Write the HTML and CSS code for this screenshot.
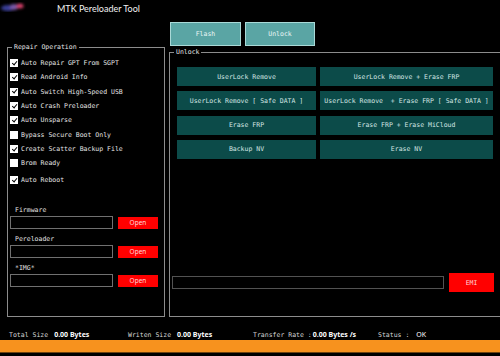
FILE: index.html
```html
<html lang="en">
<head>
	<meta charset="utf-8">
	<title>MTK Pereloader Tool</title>
	<link rel="stylesheet" href="styles.css">
</head>
<body>
	<div class="titlebar">
		<svg class="logo" width="30" height="16" viewBox="0 0 30 16">
			<defs>
				<filter id="soft"><feGaussianBlur stdDeviation="1.4"></feGaussianBlur></filter>
			</defs>
			<g filter="url(#soft)">
				<ellipse cx="8" cy="8" rx="7" ry="3" fill="#3a3f9a"></ellipse>
				<ellipse cx="14" cy="7" rx="4" ry="3" fill="#7a5aa8"></ellipse>
				<ellipse cx="20" cy="6" rx="3.5" ry="2.5" fill="#d8406a"></ellipse>
			</g>
		</svg>
		<span class="title">MTK Pereloader Tool</span>
	</div>

	<div class="main">
		<div class="group repair">
			<span class="legend">Repair Operation</span>
			<ul class="options">
				<li><span class="check on"></span>Auto Repair GPT From SGPT</li>
				<li><span class="check on"></span>Read Android Info</li>
				<li><span class="check on"></span>Auto Switch High-Speed USB</li>
				<li><span class="check on"></span>Auto Crash Preloader</li>
				<li><span class="check on"></span>Auto Unsparse</li>
				<li><span class="check"></span>Bypass Secure Boot Only</li>
				<li><span class="check on"></span>Create Scatter Backup File</li>
				<li><span class="check"></span>Brom Ready</li>
				<li class="reboot"><span class="check on"></span>Auto Reboot</li>
			</ul>
			<div class="files">
				<div class="file_label">Firmware</div>
				<div class="file_row"><input class="field" type="text"><button class="red_button">Open</button></div>
				<div class="file_label">Pereloader</div>
				<div class="file_row"><input class="field" type="text"><button class="red_button">Open</button></div>
				<div class="file_label">*IMG*</div>
				<div class="file_row"><input class="field" type="text"><button class="red_button">Open</button></div>
			</div>
		</div>

		<div class="side">
			<div class="tabs">
				<button class="tab flash_tab">Flash</button>
				<button class="tab unlock_tab">Unlock</button>
			</div>
			<div class="group unlock">
				<span class="legend">Unlock</span>
				<div class="actions">
					<button class="action">UserLock Remove</button>
					<button class="action">UserLock Remove + Erase FRP</button>
					<button class="action">UserLock Remove [ Safe DATA ]</button>
					<button class="action">UserLock Remove &nbsp;+ Erase FRP [ Safe DATA ]</button>
					<button class="action">Erase FRP</button>
					<button class="action">Erase FRP + Erase MiCloud</button>
					<button class="action">Backup NV</button>
					<button class="action">Erase NV</button>
				</div>
				<div class="emi_row">
					<input class="field log_field" type="text">
					<button class="red_button emi_button">EMI</button>
				</div>
			</div>
		</div>
	</div>

	<div class="status">
		<div class="stat total"><span class="stat_label">Total Size</span><span class="stat_value">0.00 Bytes</span></div>
		<div class="stat written"><span class="stat_label">Writen Size</span><span class="stat_value">0.00 Bytes</span></div>
		<div class="stat rate"><span class="stat_label">Transfer Rate :</span><span class="stat_value">0.00 Bytes /s</span></div>
		<div class="stat state"><span class="stat_label">Status :</span><span class="stat_ok">OK</span></div>
	</div>
	<div class="progress"></div>
</body>
</html>
```

FILE: styles.css
```css
body {
	margin: 0;
	width: 500px;
	height: 356px;
	overflow: hidden;
	background-color: #000000;
	color: #e4e4e4;
	font-family: "DejaVu Sans Mono", monospace;
	font-size: 6.5px;
}

button, input {
	font-family: inherit;
	font-size: inherit;
	margin: 0;
	padding: 0;
}

.titlebar {
	height: 22px;
	display: flex;
	align-items: flex-start;
}

.title {
	margin-left: 27px;
	margin-top: 3px;
	font-family: "Lato", sans-serif;
	font-size: 9px;
	color: #f2f2f2;
}

.main {
	display: flex;
	padding-left: 7px;
	height: 295px;
}

.group {
	position: relative;
	box-sizing: border-box;
	border: 1px solid #8c8c8c;
}

.legend {
	position: absolute;
	top: -5px;
	left: 4px;
	padding: 0 2px;
	line-height: 9px;
	background-color: #000000;
	color: #e4e4e4;
}

.repair {
	flex: none;
	width: 158px;
	height: 270px;
	margin-top: 25px;
	padding: 8px 0 0 2px;
}

.options {
	list-style: none;
	margin: 0;
	padding: 0;
}

.options li {
	height: 14.3px;
	display: flex;
	align-items: center;
	gap: 3px;
	white-space: nowrap;
}

.options .reboot {
	margin-top: 2.7px;
}

.check {
	position: relative;
	width: 8px;
	height: 8px;
	background-color: #ffffff;
	flex: none;
}

.check.on::after {
	content: "";
	position: absolute;
	left: 2.6px;
	top: 0.6px;
	width: 2px;
	height: 4.4px;
	border: solid #000000;
	border-width: 0 1.3px 1.3px 0;
	transform: rotate(40deg);
}

.files {
	margin-top: 19px;
}

.file_label {
	line-height: 8px;
	padding-left: 5px;
	margin-bottom: 2px;
}

.file_row {
	display: flex;
	align-items: center;
	gap: 5px;
	margin-bottom: 6px;
}

.field {
	box-sizing: border-box;
	width: 103px;
	height: 13px;
	background-color: #000000;
	border: 1px solid #707070;
	outline: none;
}

.red_button {
	width: 40px;
	height: 12px;
	border: none;
	background-color: #ff0000;
	color: #ffd6d6;
	font-family: "Noto Sans", sans-serif;
	font-size: 6.5px;
}

.side {
	flex: none;
	margin-left: 4px;
	display: flex;
	flex-direction: column;
}

.tabs {
	display: flex;
	gap: 4px;
	padding-left: 1px;
	height: 24px;
}

.tab {
	box-sizing: border-box;
	height: 24px;
	border: 1px solid #a9d9d7;
	background-color: #5aa5a4;
	color: #eaf6f6;
}

.flash_tab {
	width: 71px;
}

.unlock_tab {
	width: 70px;
}

.unlock {
	width: 336px;
	height: 265px;
	margin-top: 6px;
	display: flex;
	flex-direction: column;
}

.actions {
	display: grid;
	grid-template-columns: 139px 173px;
	grid-auto-rows: 19px;
	column-gap: 4px;
	row-gap: 5.3px;
	padding: 14px 0 0 7px;
}

.action {
	border: none;
	background-color: #0c4b49;
	color: #d4e6e4;
	white-space: nowrap;
}

.emi_row {
	margin-top: auto;
	margin-bottom: 24px;
	padding-left: 2px;
	display: flex;
	align-items: center;
	gap: 5px;
}

.log_field {
	width: 272px;
	border-color: #525252;
}

.emi_button {
	width: 45px;
	height: 19px;
	font-family: "DejaVu Sans Mono", monospace;
}

.status {
	display: grid;
	grid-template-columns: 119px 125px 125px auto;
	align-items: center;
	height: 11px;
	padding: 12px 0 0 9px;
}

.stat {
	display: flex;
	align-items: baseline;
	gap: 6px;
	white-space: nowrap;
}

.rate {
	gap: 1px;
}

.state {
	gap: 7px;
}

.stat_label {
	color: #d6d6d6;
}

.stat_value {
	font-family: "Noto Sans", sans-serif;
	font-weight: bold;
	font-size: 7px;
	color: #ffffff;
}

.stat_ok {
	font-family: "Noto Sans", sans-serif;
	font-size: 7px;
	color: #ffffff;
}

.progress {
	height: 12px;
	background-color: #f7921e;
	border-bottom: 1px solid #6e4310;
}
```
